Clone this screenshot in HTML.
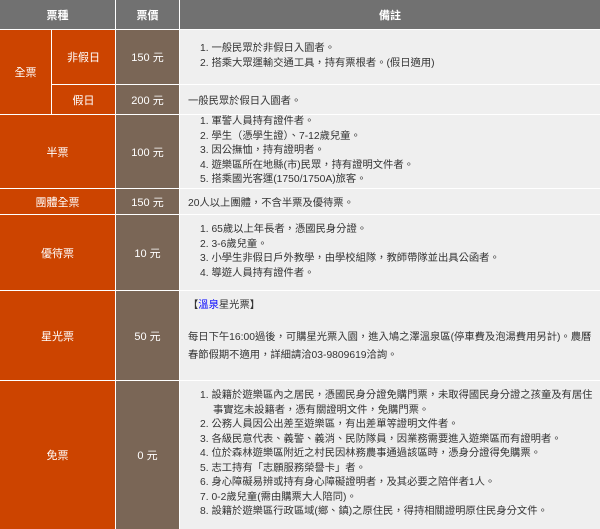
<!DOCTYPE html>
<html><head><meta charset="utf-8"><style>
body{margin:0;width:600px;height:529px;background:#fff;font-family:"Liberation Sans","Noto Sans CJK TC",sans-serif;font-size:11px;overflow:hidden;position:relative}
.c{position:absolute;box-sizing:border-box;display:flex;align-items:center;justify-content:center;color:#fff}
.h{background:#717171;font-weight:bold}
.o{background:#cc4400}
.b{background:#7a6656}
.n{background:#efefef;color:#333;justify-content:flex-start;padding-left:8px;font-size:10.3px}
.l{line-height:14.5px;flex-direction:column;align-items:stretch;justify-content:center}
.l div{padding-left:25px;text-indent:-13px}
</style></head><body>
<div class="c h" style="left:0;top:0;width:115px;height:29px">票種</div>
<div class="c h" style="left:116px;top:0;width:63px;height:29px">票價</div>
<div class="c h" style="left:180px;top:0;width:420px;height:29px">備註</div>

<div class="c o" style="left:0;top:30px;width:51px;height:84px">全票</div>
<div class="c o" style="left:52px;top:30px;width:63px;height:54px">非假日</div>
<div class="c b" style="left:116px;top:30px;width:63px;height:54px">150 元</div>
<div class="c n l" style="left:180px;top:30px;width:420px;height:54px;justify-content:flex-start;padding-top:12px"><div>1. 一般民眾於非假日入園者。</div><div>2. 搭乘大眾運輸交通工具，持有票根者。(假日適用)</div></div>

<div class="c o" style="left:52px;top:85px;width:63px;height:29px">假日</div>
<div class="c b" style="left:116px;top:85px;width:63px;height:29px">200 元</div>
<div class="c n" style="left:180px;top:85px;width:420px;height:29px">一般民眾於假日入園者。</div>

<div class="c o" style="left:0;top:115px;width:115px;height:73px">半票</div>
<div class="c b" style="left:116px;top:115px;width:63px;height:73px">100 元</div>
<div class="c n l" style="left:180px;top:115px;width:420px;height:73px"><div>1. 軍警人員持有證件者。</div><div>2. 學生（憑學生證）、7-12歲兒童。</div><div>3. 因公撫恤，持有證明者。</div><div>4. 遊樂區所在地縣(市)民眾，持有證明文件者。</div><div>5. 搭乘國光客運(1750/1750A)旅客。</div></div>

<div class="c o" style="left:0;top:189px;width:115px;height:25px">團體全票</div>
<div class="c b" style="left:116px;top:189px;width:63px;height:25px">150 元</div>
<div class="c n" style="left:180px;top:189px;width:420px;height:25px">20人以上團體，不含半票及優待票。</div>

<div class="c o" style="left:0;top:215px;width:115px;height:75px">優待票</div>
<div class="c b" style="left:116px;top:215px;width:63px;height:75px">10 元</div>
<div class="c n l" style="left:180px;top:215px;width:420px;height:75px;justify-content:flex-start;padding-top:8px"><div>1. 65歲以上年長者，憑國民身分證。</div><div>2. 3-6歲兒童。</div><div>3. 小學生非假日戶外教學，由學校組隊，教師帶隊並出具公函者。</div><div>4. 導遊人員持有證件者。</div></div>

<div class="c o" style="left:0;top:291px;width:115px;height:89px">星光票</div>
<div class="c b" style="left:116px;top:291px;width:63px;height:89px">50 元</div>
<div class="c n" style="left:180px;top:291px;width:420px;height:89px;display:block;padding-top:6px;line-height:18px"><div>【<span style="color:#00f">溫泉</span>星光票】</div><div style="height:14px"></div><div style="padding-right:2px">每日下午16:00過後，可購星光票入園，進入鳩之澤溫泉區(停車費及泡湯費用另計)。農曆春節假期不適用，詳細請洽03-9809619洽詢。</div></div>

<div class="c o" style="left:0;top:381px;width:115px;height:148px">免票</div>
<div class="c b" style="left:116px;top:381px;width:63px;height:148px">0 元</div>
<div class="c n l" style="left:180px;top:381px;width:420px;height:148px;justify-content:flex-start;padding-top:8px;padding-right:4px"><div>1. 設籍於遊樂區內之居民，憑國民身分證免購門票，未取得國民身分證之孩童及有居住事實迄未設籍者，憑有關證明文件，免購門票。</div><div>2. 公務人員因公出差至遊樂區，有出差單等證明文件者。</div><div>3. 各級民意代表、義警、義消、民防隊員，因業務需要進入遊樂區而有證明者。</div><div>4. 位於森林遊樂區附近之村民因林務農事通過該區時，憑身分證得免購票。</div><div>5. 志工持有「志願服務榮譽卡」者。</div><div>6. 身心障礙易辨或持有身心障礙證明者，及其必要之陪伴者1人。</div><div>7. 0-2歲兒童(需由購票大人陪同)。</div><div>8. 設籍於遊樂區行政區域(鄉、鎮)之原住民，得持相關證明原住民身分文件。</div></div>
</body></html>
